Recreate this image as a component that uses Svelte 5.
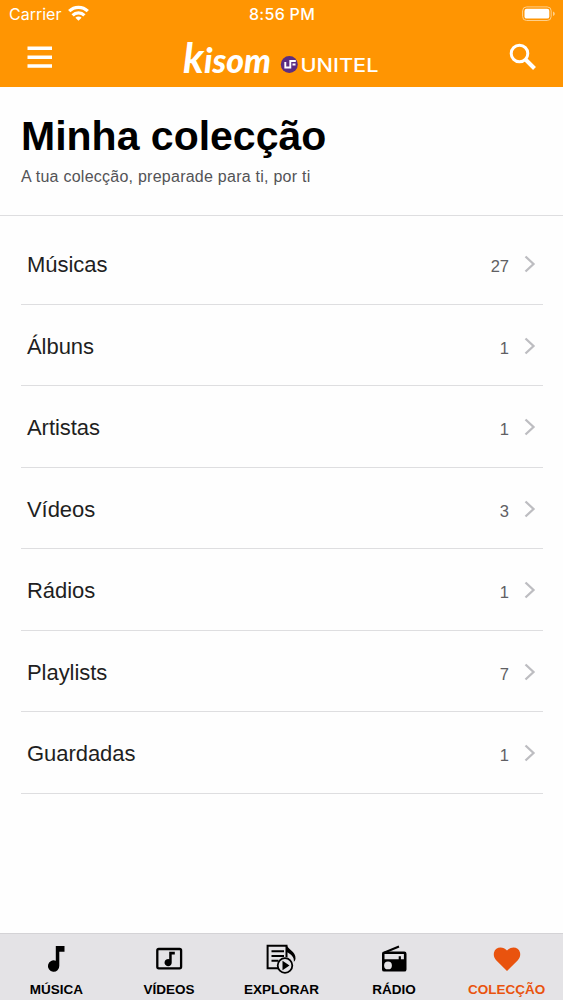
<script lang="ts">
	const items = [
		{ name: 'Músicas', count: 27 },
		{ name: 'Álbuns', count: 1 },
		{ name: 'Artistas', count: 1 },
		{ name: 'Vídeos', count: 3 },
		{ name: 'Rádios', count: 1 },
		{ name: 'Playlists', count: 7 },
		{ name: 'Guardadas', count: 1 }
	];

	const tabs = [
		{ id: 'musica', label: 'MÚSICA' },
		{ id: 'videos', label: 'VÍDEOS' },
		{ id: 'explorar', label: 'EXPLORAR' },
		{ id: 'radio', label: 'RÁDIO' },
		{ id: 'coleccao', label: 'COLECÇÃO' }
	];

	let active = $state('coleccao');
</script>

<div class="screen">
	<header>
		<div class="status">
			<div class="carrier">
				<span>Carrier</span>
				<svg width="21" height="16" viewBox="0 0 21 16" fill="none" stroke="#fff" stroke-width="3.2">
					<path d="M1.2 6.2a13.2 13.2 0 0 1 18.6 0" />
					<path d="M4.6 10.3a8.3 8.3 0 0 1 11.8 0" />
					<path d="M10.5 15.8 7.4 12.7a4.4 4.4 0 0 1 6.2 0z" fill="#fff" stroke="none" />
				</svg>
			</div>
			<span class="time">8:56 PM</span>
			<svg class="battery" width="33" height="16" viewBox="0 0 33 16">
				<rect x=".6" y=".9" width="28.6" height="13.6" rx="4" fill="none" stroke="#ffd08a" />
				<rect x="2.5" y="2.8" width="24.8" height="9.8" rx="2.2" fill="#fff" />
				<path d="M31 5.5v4.6c1.2-.5 1.8-1.3 1.8-2.3S32.2 6 31 5.5z" fill="#ffd08a" />
			</svg>
		</div>

		<div class="bar">
			<button aria-label="Menu">
				<svg width="26" height="24" viewBox="0 0 26 24" fill="#fff">
					<path d="M.5 1.500H25V5H.5zM.5 10.500H25V14H.5zM.5 19.300H25v3.500H.5z" />
				</svg>
			</button>
			<svg class="logo" width="200" height="50" viewBox="0 0 200 50" fill="#fff">
				<text class="kisom" x="3" y="40.500" textLength="88" lengthAdjust="spacingAndGlyphs"><tspan class="initial">k</tspan>isom</text>
				<circle cx="109.3" cy="32.5" r="8.5" fill="#5b2d82" />
				<path d="M105.300 30v5.500h5v-6.500h5.500M112.500 32.500h3" fill="none" stroke="#fff" stroke-width="1.9" />
				<text class="unitel" x="120.500" y="39.500" textLength="78" lengthAdjust="spacingAndGlyphs">UNITEL</text>
			</svg>
			<button aria-label="Pesquisar">
				<svg width="28" height="28" viewBox="0 0 28 28" fill="none" stroke="#fff">
					<circle cx="10.5" cy="10.5" r="8.3" stroke-width="3" />
					<path d="m16.500 16.500 9 9" stroke-width="4" />
				</svg>
			</button>
		</div>
	</header>

	<section class="heading">
		<h1>Minha colecção</h1>
		<p>A tua colecção, preparade para ti, por ti</p>
	</section>

	<ul>
		{#each items as item (item.name)}
			<li>
				<span class="name">{item.name}</span>
				<span class="count">{item.count}</span>
				<svg width="12" height="18" viewBox="0 0 12 18" fill="none" stroke="#bdbdc1" stroke-width="2.3">
					<path d="m1.500 1.500 8 7.500-8 7.500" />
				</svg>
			</li>
		{/each}
	</ul>

	<nav>
		{#each tabs as tab (tab.id)}
			<button class:active={active === tab.id} onclick={() => (active = tab.id)}>
				<svg width="32" height="32" viewBox="0 0 32 32" fill="currentColor">
					{#if tab.id === 'musica'}
						<path d="M15.800 2H24.500v5.700H19.300V21.800A5.700 5.700 0 1 1 15.800 16.800z" />
					{:else if tab.id === 'videos'}
						<rect x="4.300" y="5" width="23.800" height="19.300" rx="1.500" fill="none" stroke="currentColor" stroke-width="2.300" />
						<path d="M16.200 7.700h5.600v2.800h-3.100v7.900a3.600 3.600 0 1 1-2.500-3.200z" />
					{:else if tab.id === 'explorar'}
						<path d="M14.500 24.200H2.600V1.700H21.500v11.500M6.500 7.300h12.500M6.500 12h12.500M6.500 16.800h7" fill="none" stroke="currentColor" stroke-width="2" />
						<path d="M21.500.8c1 4.500 9.500 7 9 13.700-.1 1.500-.8 2.500-1.700 3.300.8-4.500-2.800-8-7.300-9.800z" />
						<circle cx="20" cy="21.500" r="7.300" fill="#e4e3e6" stroke="currentColor" stroke-width="1.800" />
						<path d="m17.500 16.800 7 4.700-7 4.700z" />
					{:else if tab.id === 'radio'}
						<path d="m6.500 8.500 14.500-6" fill="none" stroke="currentColor" stroke-width="2" />
						<path fill-rule="evenodd" d="M6.300 7.500h20A2.200 2.200 0 0 1 28.500 9.700v15.700a2.200 2.200 0 0 1-2.200 2.200h-20A2.200 2.200 0 0 1 4 25.400V9.700a2.200 2.200 0 0 1 2.300-2.200zM6.500 10v5.300h14.200v-3h2.200v3h3V10zM10 17.500a3.900 3.900 0 1 0 0 7.800 3.900 3.900 0 0 0 0-7.800z" />
					{:else}
						<path d="M16 27 5.400 16.500C3 14 2.400 11.500 3 8.500 4.300 2.600 12 1.800 16 6.500 20 1.800 27.700 2.600 29 8.500c.6 3 0 5.500-2.400 8z" />
					{/if}
				</svg>
				<span>{tab.label}</span>
			</button>
		{/each}
	</nav>
</div>

<style>
	:global(body) {
		margin: 0;
		background: #fefefe;
	}

	.screen {
		display: flex;
		flex-direction: column;
		height: 1000px;
		font-family: 'Liberation Sans', Arial, sans-serif;
		color: #1f1f22;
	}

	button {
		display: flex;
		border: 0;
		padding: 0;
		background: none;
		color: inherit;
		font: inherit;
	}

	header {
		box-sizing: border-box;
		height: 87px;
		background: #ff9502;
		color: #fff;
	}

	.status {
		display: grid;
		grid-template-columns: 1fr auto 1fr;
		align-items: center;
		height: 28px;
		padding: 0 8px 0 9px;
		font-family: Inter, sans-serif;
		font-size: 16px;
	}

	.carrier {
		display: flex;
		align-items: center;
		gap: 7px;
	}

	.carrier svg {
		margin-top: -3px;
	}

	.time {
		font-weight: 500;
		letter-spacing: 0.3px;
	}

	.battery {
		justify-self: end;
	}

	.bar {
		display: flex;
		align-items: center;
		justify-content: space-between;
		height: 58px;
		padding: 0 26px 0 27px;
	}

	.logo {
		margin: 0 3px 0 0;
		overflow: visible;
	}

	.kisom {
		font: italic 900 34px Lato, sans-serif;
	}

	.initial {
		font-size: 42px;
		font-weight: 700;
	}

	.unitel {
		font: 500 19px Inter, sans-serif;
	}

	.heading {
		box-sizing: border-box;
		height: 129px;
		border-bottom: 1px solid #dedee0;
		padding: 26px 21px 0;
	}

	h1 {
		margin: 0;
		color: #000;
		font-size: 41px;
		line-height: 46px;
	}

	p {
		margin: 8px 0 0;
		color: #535356;
		font-size: 16px;
		line-height: 20px;
		letter-spacing: 0.25px;
	}

	ul {
		flex: 1;
		margin: 0;
		padding: 7px 20px 0 21px;
		list-style: none;
	}

	li {
		display: flex;
		align-items: center;
		box-sizing: border-box;
		height: 81.5px;
		border-bottom: 1px solid #dedee0;
		padding: 2px 7px 0 6px;
	}

	.name {
		flex: 1;
		padding-top: 2px;
		font-size: 22px;
		letter-spacing: -0.05px;
	}

	.count {
		margin: 5px 15px 0 0;
		color: #606063;
		font-size: 16.5px;
	}

	nav {
		display: grid;
		grid-template-columns: repeat(5, 1fr);
		box-sizing: border-box;
		height: 67px;
		border-top: 1px solid #d4d3d6;
		background: #e4e3e6;
	}

	nav button {
		flex-direction: column;
		align-items: center;
		gap: 6px;
		padding-top: 10px;
		color: #000;
		font-size: 13.5px;
		font-weight: 700;
		line-height: 16px;
	}

	nav .active {
		color: #e9530e;
	}
</style>
